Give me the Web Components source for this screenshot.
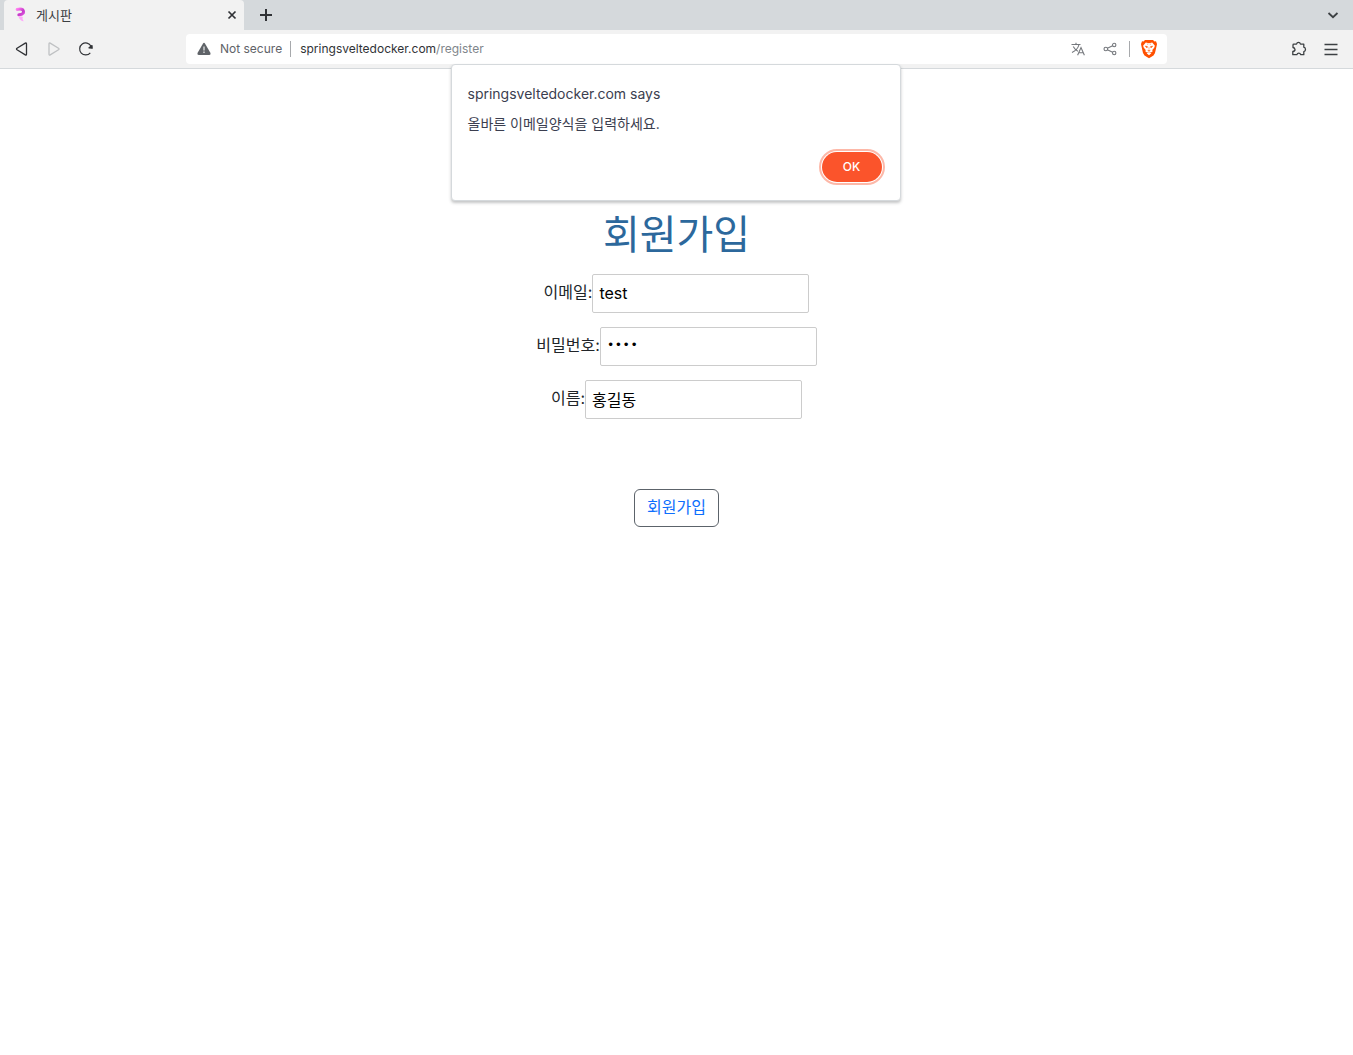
<!DOCTYPE html>
<html lang="ko">
<head>
<meta charset="utf-8">
<title>게시판</title>
<style>
html, body { margin: 0; height: 100%; }
body { font-family: Inter, "Noto Sans CJK KR", sans-serif; background: #fff; color: #212529; overflow: hidden; }
</style>
</head>
<body>
<browser-window></browser-window>
<script>
const base = `<style>
*, *::before, *::after { box-sizing: border-box; }
button { font: inherit; color: inherit; background: none; border: 0; padding: 0; margin: 0; }
svg { display: block; flex: none; }
</style>`;

function define(name, html) {
  const template = document.createElement('template');
  template.innerHTML = base + html;
  customElements.define(name, class extends HTMLElement {
    constructor() {
      super();
      this.attachShadow({ mode: 'open' }).append(template.content.cloneNode(true));
    }
  });
}

define('icon-button', `
<style>
:host { display: block; flex: none; width: 32px; height: 30px; }
button { display: flex; align-items: center; justify-content: center; width: 100%; height: 100%; }
</style>
<button type="button"><slot></slot></button>`);

define('tab-strip', `
<style>
:host { display: flex; align-items: stretch; height: 30px; padding: 0 4px; background: #d5d9dc; color: #3b3e4f; }
.tab { display: flex; align-items: center; width: 240px; padding: 0 4px 0 8px; background: #f2f2f2; border-radius: 4px 4px 0 0; font-size: 13px; line-height: 20px; }
.name { flex: 1; padding-left: 8px; color: #3c4043; }
.close { width: 16px; }
.add { margin-left: 6px; }
.search { margin-left: auto; width: 32px; }
</style>
<div class="tab">
  <svg width="16" height="16" viewBox="0 0 16 16"><defs><linearGradient id="g" x1="0" y1="0" x2="1" y2="1"><stop offset="0" stop-color="#ff7bf0"/><stop offset=".6" stop-color="#c63bc9"/><stop offset="1" stop-color="#d94fdc"/></linearGradient></defs><path d="M5.200 2.400Q9 1.400 10.700 2.700Q12 4.200 11.200 6.200Q10 7.800 6.800 7.800" fill="none" stroke="url(#g)" stroke-width="3" stroke-linecap="round"/><path d="M6.500 9.500Q9 9 11 10.200Q9.800 11.500 11.800 14.300Q8 14 6.500 9.500Z" fill="#ffa8fa"/></svg>
  <span class="name">게시판</span>
  <icon-button class="close"><svg width="10" height="10" viewBox="0 0 10 10" role="img" aria-label="Close"><path d="M1.500 1.500l7 7m0-7l-7 7" stroke="#303236" stroke-width="1.700"/></svg></icon-button>
</div>
<icon-button class="add"><svg width="14" height="14" viewBox="0 0 14 14" role="img" aria-label="New tab"><path d="M7 1v12M1 7h12" stroke="#303236" stroke-width="2"/></svg></icon-button>
<icon-button class="search"><svg width="12" height="12" viewBox="0 0 12 12" role="img" aria-label="Search tabs"><path d="M1.500 4L6 8.200L10.500 4" fill="none" stroke="#3c4043" stroke-width="1.800"/></svg></icon-button>`);

define('address-bar', `
<style>
:host { display: flex; align-items: center; height: 30px; padding: 0 2px 0 10px; background: #fff; border-radius: 4px; font-size: 12px; line-height: 20px; color: #5f6368; white-space: nowrap; }
.security { display: flex; align-items: center; gap: 8px; }
.url { flex: 1; color: #80868b; }
.host { color: #303236; }
i { flex: none; width: 1px; height: 16px; margin: 0 3px; background: #a7a9ac; }
.security + i { margin: 0 9px 0 8px; }
</style>
<button class="security" type="button"><svg width="16" height="16" viewBox="0 0 16 16"><path d="M6.900 2.700Q8 1 9.100 2.700L14.500 12Q15 14 13.300 14H2.700Q1 14 1.500 12Z" fill="#5f6368"/><path d="M8 5.500v4M8 10.500v1.500" stroke="#fff" stroke-opacity=".75" stroke-width="1.400"/></svg><span>Not secure</span></button>
<i></i>
<span class="url"><span class="host">springsveltedocker.com</span>/register</span>
<icon-button><svg width="16" height="16" viewBox="0 0 16 16" fill="none" stroke="#75787d" stroke-width="1.100" role="img" aria-label="Translate"><path d="M1.500 3.500h9M6 1.800v1.700M2 11.500Q8 8.500 9 3.500M3.200 5.500Q5.500 9.500 8 10.200M7.600 14.200L11 6.500L14.400 14.200M8.800 11.700h4.400"/></svg></icon-button>
<icon-button><svg width="16" height="16" viewBox="0 0 16 16" fill="none" stroke="#75787d" stroke-width="1.100" role="img" aria-label="Share"><circle cx="3.800" cy="8" r="1.800"/><circle cx="12.200" cy="4" r="1.700"/><circle cx="12.200" cy="12" r="1.700"/><path d="M5.400 7.200L10.600 4.700M5.400 8.800L10.600 11.300"/></svg></icon-button>
<i></i>
<icon-button><svg width="18" height="20" viewBox="0 0 18 20" role="img" aria-label="Brave Shields"><path d="M5 1h8l1.500 1.500 1.500-.2L17 5l-.4 2L15 14l-1.500 2.500L9 19.200l-4.500-2.700L3 14 1.400 7 1 5l1-2.700 1.500.2Z" fill="#ff5000"/><path d="M5.800 3.600L9 4.200l3.200-.6 2.700 3.100-.7 2-1.900 2.200.3 1.600-1.700 1-1.900-1-1.900 1-1.700-1 .3-1.600-1.900-2.200-.7-2ZM6.700 14.200L9 13l2.300 1.200L9 16.200Z" fill="#fff"/><path d="M5.200 7l2.400.6L7 9ZM12.800 7l-2.400.6.6 1.400ZM7.500 11.200L9 12l1.500-.8M9 8v3.500M7.300 4.500l.6 1.500M10.700 4.500L10.100 6" fill="#ff5000" stroke="#ff5000" stroke-width=".4"/></svg></icon-button>`);

define('tool-bar', `
<style>
:host { display: flex; align-items: center; height: 39px; padding: 0 6px; background: #f2f2f2; border-bottom: 1px solid #d5d9dc; }
nav { display: flex; width: 180px; flex: none; }
address-bar { flex: 1; }
.end { display: flex; justify-content: flex-end; width: 180px; flex: none; }
</style>
<nav>
  <icon-button><svg width="16" height="16" viewBox="0 0 16 16" fill="none" stroke="#303236" stroke-width="1.300" stroke-linejoin="round" role="img" aria-label="Back"><path d="M12.500 3v10Q12.500 14.500 11.300 13.900L3 8.800Q2 8 3 7.200L11.300 2.100Q12.500 1.500 12.500 3Z"/></svg></icon-button>
  <icon-button><svg width="16" height="16" viewBox="0 0 16 16" fill="none" stroke="#bfc1c3" stroke-width="1.300" stroke-linejoin="round" role="img" aria-label="Forward"><path d="M3 3v10Q3 14.500 4.200 13.900L12.500 8.800Q13.500 8 12.500 7.200L4.200 2.100Q3 1.500 3 3Z"/></svg></icon-button>
  <icon-button><svg width="16" height="16" viewBox="0 0 16 16" fill="none" stroke="#303236" stroke-width="1.200" role="img" aria-label="Reload"><path d="M12.300 11.800A6 6 0 1 1 13 5.200"/><path d="M11 6.800L14 4.600L14.200 7.200Z" fill="#303236" stroke="#303236" stroke-linejoin="round"/></svg></icon-button>
</nav>
<address-bar></address-bar>
<div class="end">
  <icon-button><svg width="16" height="16" viewBox="0 0 16 16" fill="none" stroke="#3c4043" stroke-width="1.300" stroke-linejoin="round" role="img" aria-label="Extensions"><path d="M2.800 3.200H5.500Q6 1.300 7.500 1.300T9.500 3.200H12.800V6.200Q14.500 6.700 14.500 8.500T12.800 10.700V13.700H9.800Q9.200 12.200 7.800 12.200T5.800 13.700H1.800V10.500Q4.200 10.200 4 8.500T2 6.500V4Q2 3.200 2.800 3.200Z"/></svg></icon-button>
  <icon-button><svg width="16" height="16" viewBox="0 0 16 16" role="img" aria-label="Menu"><path d="M1.500 3.500h13M1.500 8.500h13M1.500 13.500h13" stroke="#3c4043" stroke-width="1.400"/></svg></icon-button>
</div>`);

define('alert-dialog', `
<style>
:host { position: absolute; top: 64px; left: calc(50% - 226px); width: 450px; display: flex; flex-direction: column; padding: 19px 16px 16px; background: #fff; color: #3b3e4f; border: 1px solid #d5d9dc; border-radius: 4px; box-shadow: 0 2px 3px rgba(60, 64, 67, .3); box-sizing: border-box; }
h2 { margin: 0; font-size: 14px; line-height: 20px; font-weight: 400; }
p { margin: 10px 0 16px; font-size: 14px; line-height: 20px; }
button { align-self: flex-end; width: 60px; height: 30px; margin: 2px; border-radius: 15px; background: #fb542b; color: #fff; font-size: 12px; line-height: 30px; font-weight: 500; outline: 2px solid #fdb8a8; outline-offset: 1px; }
</style>
<h2><slot name="title"></slot></h2>
<p><slot></slot></p>
<button type="button">OK</button>`);

customElements.define('form-field', class extends HTMLElement {
  constructor() {
    super();
    this.attachShadow({ mode: 'open' }).innerHTML = base + `
<style>
:host { display: flex; align-items: center; justify-content: center; font-size: 16px; line-height: 24px; }
label { padding-bottom: 4px; }
input { width: 217px; height: 39px; padding: 4px 6px 6px; border: 1px solid #ccc; border-radius: 2px; background: #fff; color: #000; font: inherit; }
input[type=password] { font-family: "Liberation Mono", monospace; font-size: 13px; }
</style>
<label for="field"><slot></slot></label><input id="field">`;
    const input = this.shadowRoot.querySelector('input');
    input.type = this.getAttribute('type') || 'text';
    input.value = this.getAttribute('value') || '';
  }
});

define('register-form', `
<style>
:host { display: block; padding-top: 142px; }
form { display: flex; flex-direction: column; align-items: center; }
h1 { margin: 0 0 15px; font-size: 40px; line-height: 48px; font-weight: 400; color: #2c689c; }
.fields { display: flex; flex-direction: column; gap: 14px; }
button { margin-top: 70px; height: 38px; padding: 0 12px 2px; border: 1px solid #5c636a; border-radius: 6px; font-size: 16px; line-height: 24px; color: #0d6efd; }
</style>
<form>
  <h1>회원가입</h1>
  <div class="fields">
    <form-field value="test">이메일:</form-field>
    <form-field type="password" value="test">비밀번호:</form-field>
    <form-field value="홍길동">이름:</form-field>
  </div>
  <button type="button">회원가입</button>
</form>`);

define('browser-window', `
<style>
:host { position: relative; display: flex; flex-direction: column; min-height: 100%; }
main { flex: 1; }
</style>
<tab-strip></tab-strip>
<tool-bar></tool-bar>
<main><register-form></register-form></main>
<alert-dialog><span slot="title">springsveltedocker.com says</span>올바른 이메일양식을 입력하세요.</alert-dialog>`);
</script>
</body>
</html>
